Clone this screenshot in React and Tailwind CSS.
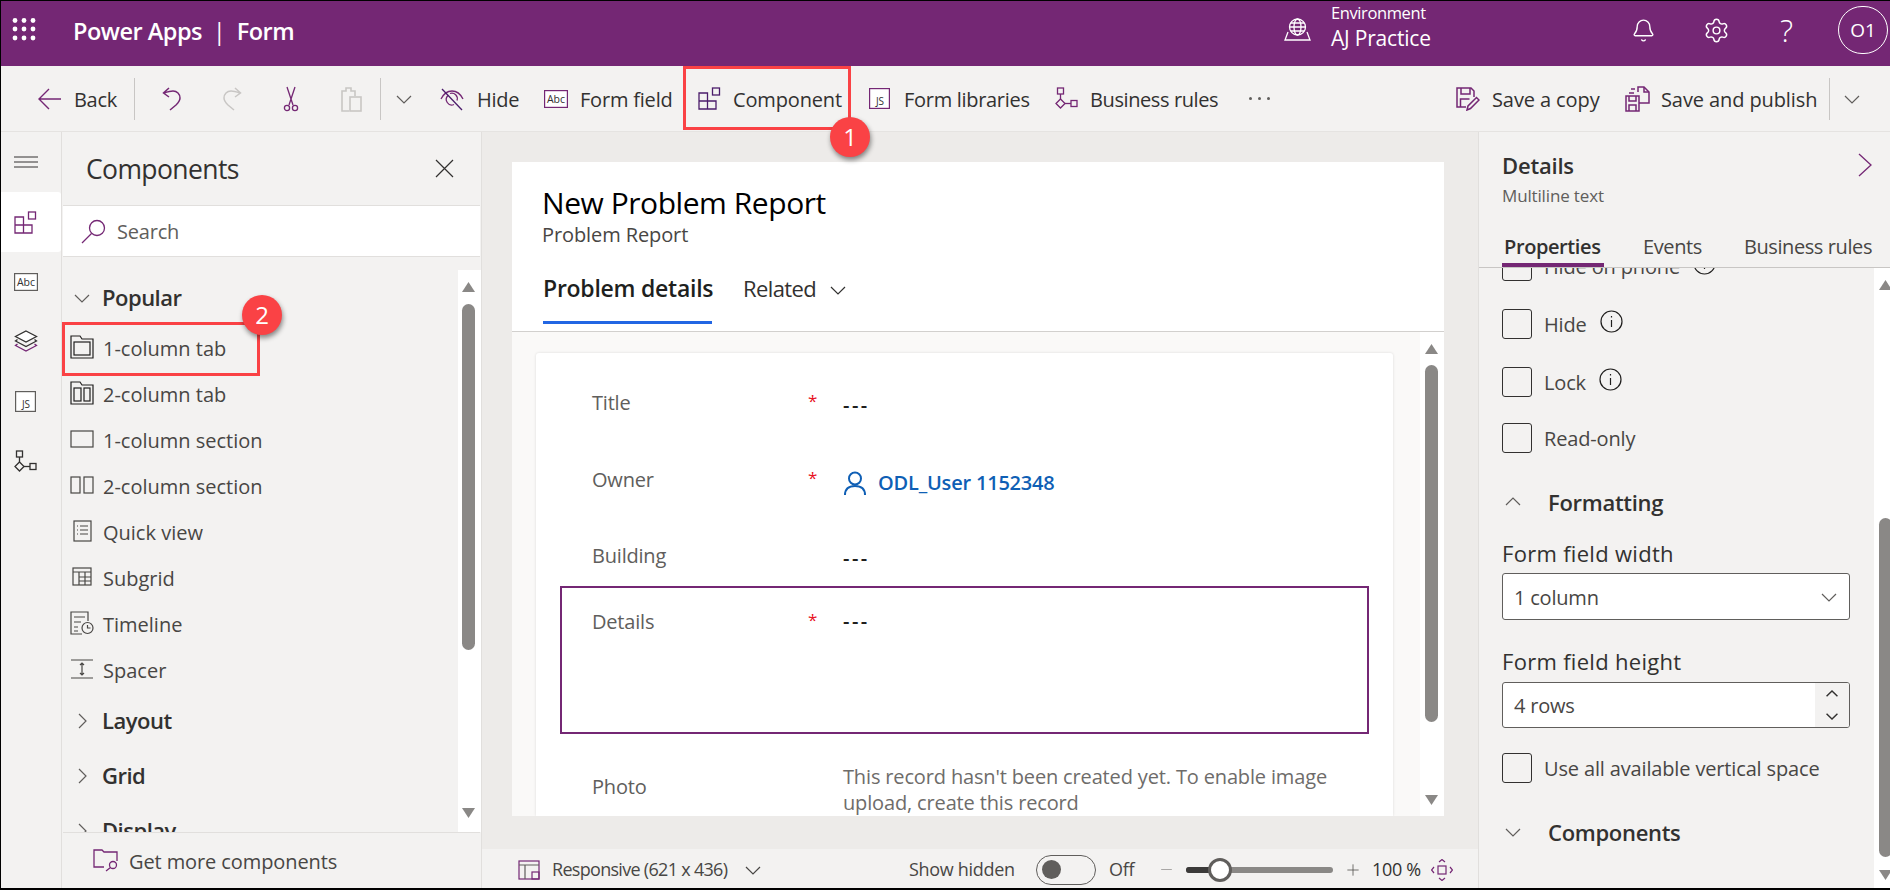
import React from 'react';
import { Bell, Settings, Minus, Plus } from 'lucide-react';

const PURPLE = '#742774';
const DARK = '#323130';

const Chev = ({ dir = 'down', size = 18, color = '#605e5c', w = 1.2 }) => {
    const pts = {
        down: '2,6 9,13 16,6',
        up: '2,12 9,5 16,12',
        right: '6,2 13,9 6,16',
    };
    return (
        <svg width={size} height={size} viewBox="0 0 18 18" className="shrink-0">
            <polyline points={pts[dir]} fill="none" stroke={color} strokeWidth={w} />
        </svg>
    );
};

const Waffle = () => (
    <svg width="26" height="24" viewBox="0 0 26 24" className="shrink-0">
        {[3, 12, 21].map((x) => [2.5, 11, 20].map((y) => (
            <circle key={`${x}-${y}`} cx={x} cy={y} r="2.4" fill="white" />
        )))}
    </svg>
);

const GlobeIcon = () => (
    <svg width="29" height="24" viewBox="0 0 29 24" fill="none" stroke="white" strokeWidth="1.3" className="shrink-0">
        <circle cx="14.5" cy="9" r="8" />
        <ellipse cx="14.5" cy="9" rx="3.5" ry="8" />
        <path d="M6.5 9h16M7.5 5h14M7.5 13h14" />
        <path d="M5 14l-3 8h25l-3-8" />
    </svg>
);

const BackIcon = () => (
    <svg width="23" height="24" viewBox="0 0 23 24" fill="none" stroke={PURPLE} strokeWidth="1.4" className="shrink-0">
        <path d="M11 2L1 12l10 10M1 12h22" />
    </svg>
);

const UndoIcon = ({ color = PURPLE, flip }) => (
    <svg width="20" height="24" viewBox="0 0 20 24" fill="none" stroke={color} strokeWidth="1.5" className={`shrink-0 ${flip ? '-scale-x-100' : ''}`}>
        <path d="M7 1L1.500 6L7 10M2 6c3-1 6-2 9-2c4 0 7 3 7 7c0 3-2 5-4 7l-6 5" />
    </svg>
);

const CutIcon = () => (
    <svg width="16" height="26" viewBox="0 0 16 26" fill="none" stroke={PURPLE} strokeWidth="1.3" className="shrink-0">
        <path d="M4 1l6 18M12 1L6 19" />
        <circle cx="4" cy="22" r="2.600" />
        <circle cx="12" cy="22" r="2.600" />
    </svg>
);

const PasteIcon = () => (
    <svg width="22" height="26" viewBox="0 0 22 26" fill="none" stroke="#c8c6c4" strokeWidth="1.6" className="shrink-0">
        <path d="M9 25H2V5h4V2h5v3h4v5" />
        <rect x="10" y="11" width="11" height="14" />
    </svg>
);

const HideIcon = () => (
    <svg width="24" height="26" viewBox="0 0 24 26" fill="none" stroke={PURPLE} strokeWidth="1.300" className="shrink-0">
        <path d="M1 13c3-6 7-8 11-8s8 2 11 8" />
        <path d="M8 9.500a5.500 5.500 0 0 0 6 9M10 7.500a5.500 5.500 0 0 1 7 7" />
        <path d="M2 3l20 21" stroke="#4b1c6b" />
    </svg>
);

const AbcIcon = ({ w = 24, h = 18, color = PURPLE }) => (
    <svg width={w} height={h} viewBox="0 0 24 18" className="shrink-0">
        <rect x="0.600" y="0.600" width="22.800" height="16.800" fill="white" stroke={color} strokeWidth="1.200" />
        <text x="12" y="13" fontSize="10.500" textAnchor="middle" fill={DARK} fontFamily="Open Sans, sans-serif">Abc</text>
    </svg>
);

const JsIcon = ({ color = PURPLE }) => (
    <svg width="21" height="21" viewBox="0 0 21 21" className="shrink-0">
        <rect x="0.600" y="0.600" width="19.800" height="19.800" fill="white" stroke={color} strokeWidth="1.200" />
        <text x="11" y="17" fontSize="10" textAnchor="middle" fill={DARK} fontFamily="Open Sans, sans-serif">JS</text>
    </svg>
);

const ComponentIcon = ({ color = '#4b1c6b' }) => (
    <svg width="23" height="23" viewBox="0 0 23 23" fill="none" stroke={color} strokeWidth="1.300" className="shrink-0">
        <path d="M1 6h8.500v16H1zM1 14h17v8H9.500M9.500 14h8.500" />
        <rect x="14.500" y="1" width="7" height="7" />
    </svg>
);

const RulesIcon = ({ color = PURPLE }) => (
    <svg width="23" height="23" viewBox="0 0 23 23" fill="none" stroke={color} strokeWidth="1.300" className="shrink-0">
        <rect x="2.500" y="1" width="6" height="6" />
        <path d="M5.500 7v5" />
        <path d="M5.500 12l4.500 4.500L5.500 21 1 16.500z" />
        <path d="M10 16.500h6" />
        <rect x="16" y="13.500" width="6" height="6" />
    </svg>
);

const SaveCopyIcon = () => (
    <svg width="24" height="24" viewBox="0 0 24 24" fill="none" stroke={PURPLE} strokeWidth="1.500" className="shrink-0">
        <path d="M10 20H1V1h14l3 3v6" />
        <path d="M5 1v6h9V1M4.500 20v-8h9" />
        <path d="M11 23l1-4 8.500-8.500 2.500 2.500-8.500 8.500z" />
    </svg>
);

const SavePublishIcon = () => (
    <svg width="25" height="26" viewBox="0 0 25 26" fill="none" stroke={PURPLE} strokeWidth="1.500" className="shrink-0">
        <path d="M1 10h13v15H1zM4 10v5h7v-5M4 25v-6h7v6" />
        <path d="M14 17h10V6l-5-5h-6v5" />
        <path d="M19 1v5h5M6 3h4M4 7h5" />
    </svg>
);

const SearchIcon = () => (
    <svg width="25" height="25" viewBox="0 0 25 25" fill="none" stroke={PURPLE} strokeWidth="1.300" className="shrink-0">
        <circle cx="16" cy="9" r="7.500" />
        <path d="M10.500 14.500L1 24" />
    </svg>
);

const LayersIcon = () => (
    <svg width="24" height="22" viewBox="0 0 24 22" fill="none" stroke={PURPLE} strokeWidth="1.300" className="shrink-0">
        <path d="M12 1l10.500 5.500L12 12 1.500 6.500z" fill="white" stroke={DARK} />
        <path d="M3.500 9.500L1.500 11 12 16.500 22.500 11l-2-1.500" stroke={DARK} />
        <path d="M3.500 14L1.500 15.500 12 21l10.500-5.500-2-1.500" />
    </svg>
);

const ItemIcon = ({ type }) => {
    if (type === 'tab1') return (
        <svg width="24" height="24" viewBox="0 0 24 24" fill="none" stroke="#201f1e" strokeWidth="1.200">
            <path d="M1 23V1h9l2 3h11v19z" />
            <rect x="4" y="7" width="16" height="13" />
        </svg>
    );
    if (type === 'tab2') return (
        <svg width="24" height="24" viewBox="0 0 24 24" fill="none" stroke="#201f1e" strokeWidth="1.200">
            <path d="M1 23V1h9l2 3h11v19z" />
            <rect x="4" y="7" width="7" height="13" />
            <rect x="14" y="7" width="6" height="13" />
        </svg>
    );
    if (type === 'sec1') return (
        <svg width="24" height="18" viewBox="0 0 24 18" fill="none" stroke="#484644" strokeWidth="1.200">
            <rect x="1" y="1" width="22" height="16" />
        </svg>
    );
    if (type === 'sec2') return (
        <svg width="24" height="18" viewBox="0 0 24 18" fill="none" stroke="#484644" strokeWidth="1.200">
            <rect x="1" y="1" width="9" height="16" />
            <rect x="14" y="1" width="9" height="16" />
        </svg>
    );
    if (type === 'quick') return (
        <svg width="24" height="22" viewBox="0 0 24 22" fill="none" stroke="#484644" strokeWidth="1.200">
            <rect x="4" y="1" width="17" height="20" />
            <path d="M7 6h1M10 6h8M7 10h1M10 10h8M7 14h1M10 14h8" />
        </svg>
    );
    if (type === 'grid') return (
        <svg width="24" height="20" viewBox="0 0 24 20" fill="none" stroke="#484644" strokeWidth="1.200">
            <rect x="3" y="1" width="18" height="17" />
            <path d="M3 5h18M9 5v13M15 5v13M9 10h12M9 14h12" />
        </svg>
    );
    if (type === 'time') return (
        <svg width="24" height="24" viewBox="0 0 24 24" fill="none" stroke="#484644" strokeWidth="1.200">
            <path d="M12 23H1V1h17v9" />
            <path d="M4 6h11M4 11h7M4 16h4M4 20h4" />
            <circle cx="17.500" cy="17" r="5.500" />
            <path d="M17.500 14v3h3" />
        </svg>
    );
    return (
        <svg width="24" height="20" viewBox="0 0 24 20" fill="none" stroke="#484644" strokeWidth="1.200">
            <path d="M1 1h22M1 19h22M12 4v12M10 6l2-2 2 2M10 14l2 2 2-2" />
        </svg>
    );
};

const GetMoreIcon = () => (
    <svg width="25" height="23" viewBox="0 0 25 23" fill="none" stroke={PURPLE} strokeWidth="1.300" className="shrink-0">
        <path d="M11 18H1V1h8l2 2h13v9" />
        <circle cx="20" cy="16" r="3.500" />
        <path d="M17.500 18.500L13 22" />
    </svg>
);

const UserIcon = () => (
    <svg width="22" height="25" viewBox="0 0 22 25" fill="none" stroke="#0f5fb5" strokeWidth="2" className="shrink-0">
        <circle cx="11" cy="7.500" r="6" />
        <path d="M1 24c0-6 4-9 10-9s10 3 10 9" />
    </svg>
);

const ResponsiveIcon = () => (
    <svg width="22" height="20" viewBox="0 0 22 20" fill="none" stroke={PURPLE} strokeWidth="1.200" className="shrink-0">
        <rect x="1" y="1" width="20" height="18" />
        <path d="M1 5h20M7 5v14" stroke="#605e5c" />
        <rect x="14" y="12" width="7" height="7" />
    </svg>
);

const FitIcon = () => (
    <svg width="22" height="22" viewBox="0 0 22 22" fill="none" stroke={PURPLE} strokeWidth="1.200" className="shrink-0">
        <rect x="7" y="7" width="8" height="8" />
        <path d="M8 3l3-2.500L14 3M8 19l3 2.500 3-2.500M3 8L.500 11 3 14M19 8l2.500 3-2.500 3" />
    </svg>
);

const Triangle = ({ up, size = 13 }) => (
    <svg width={size} height="10" viewBox="0 0 13 10" className="shrink-0">
        <polygon points={up ? '6.500,0 13,10 0,10' : '0,0 13,0 6.500,10'} fill="#8a8886" />
    </svg>
);

const Info = () => (
    <svg width="23" height="23" viewBox="0 0 23 23" fill="none" stroke="#201f1e" strokeWidth="1.200" className="shrink-0">
        <circle cx="11.500" cy="11.500" r="10.500" />
        <path d="M11.500 10v7M11.500 6v1.500" />
    </svg>
);

const Sep = ({ className = '' }) => <div className={`w-px h-[42px] bg-[#c8c6c4] shrink-0 ${className}`} />;

const Cmd = ({ icon, label, className, gap = 'ml-[13px]', tracking = 'tracking-[-0.3px]' }) => (
    <div className={`flex items-center shrink-0 ${className}`}>
        {icon}
        <span className={`${gap} ${tracking} mt-[3px] text-[20px] text-[#323130] whitespace-nowrap`}>{label}</span>
    </div>
);

const CheckRow = ({ label, info, className = '' }) => (
    <div className={`flex items-center h-[30px] ${className}`}>
        <div className="w-[30px] h-[30px] border border-[#323130] rounded-[3px] shrink-0" />
        <span className="ml-[12px] mt-[2px] text-[20px] tracking-[-0.15px] text-[#484644] whitespace-nowrap">{label}</span>
        {info && <span className="ml-[13px] -mt-[6px]"><Info /></span>}
    </div>
);

const Field = ({ label, star, className = '', children }) => (
    <div className={`flex ${className}`}>
        <span className="w-[216px] text-[20px] leading-[28px] tracking-[-0.2px] text-[#605e5c]">{label}</span>
        <span className="w-[35px] text-[17px] leading-[24px] text-[#e81123]">{star ? '*' : ''}</span>
        <div className="flex-1">{children}</div>
    </div>
);

const Dashes = ({ className = 'pt-[2px]' }) => <span className={`block text-[20px] leading-[28px] font-semibold tracking-[2.5px] text-[#201f1e] ${className}`}>---</span>;

const leftItems = [
    ['tab1', '1-column tab'],
    ['tab2', '2-column tab'],
    ['sec1', '1-column section'],
    ['sec2', '2-column section'],
    ['quick', 'Quick view'],
    ['grid', 'Subgrid'],
    ['time', 'Timeline'],
    ['spacer', 'Spacer'],
];

const Group = ({ label, open }) => (
    <div className="flex items-center h-[55px] shrink-0 pl-[11px]">
        <Chev dir={open ? 'down' : 'right'} />
        <span className="ml-[11px] text-[22px] font-semibold tracking-[-0.5px] text-[#323130]">{label}</span>
    </div>
);

const Badge = ({ n, className }) => (
    <div className={`absolute w-[40px] h-[40px] rounded-full bg-[#fa4245] text-white text-[24px] font-medium flex items-center justify-center shadow-[1px_3px_5px_rgba(0,0,0,0.45)] ${className}`}>{n}</div>
);

export default function App() {
    return (
        <div className="relative w-[1890px] h-[890px] overflow-hidden flex flex-col border-t border-l border-b-2 border-black bg-[#f3f2f1] font-['Open_Sans',sans-serif]">
            {/* Top bar */}
            <header className="h-[65px] shrink-0 bg-[#742774] text-white flex items-center pl-[11px] pr-[2px] pb-[7px]">
                <Waffle />
                <span className="ml-[35px] mt-[3px] text-[23.500px] font-semibold tracking-[-0.5px] whitespace-nowrap">Power Apps</span>
                <span className="ml-[11px] mt-[3px] text-[23px] font-normal">|</span>
                <span className="ml-[11px] mt-[3px] text-[23.500px] font-semibold tracking-[-0.5px]">Form</span>
                <div className="ml-auto flex items-center">
                    <GlobeIcon />
                    <div className="ml-[19px] w-[300px] flex flex-col -mt-[7px]">
                        <span className="text-[16.500px] leading-[22px] tracking-[-0.4px]">Environment</span>
                        <span className="text-[21px] leading-[28px] tracking-[-0.2px]">AJ Practice</span>
                    </div>
                    <Bell size={25} strokeWidth={1.3} />
                    <Settings size={27} strokeWidth={1.3} className="ml-[47px]" />
                    <span className="ml-[50px] w-[13px] text-[31px] leading-none font-light">?</span>
                    <div className="ml-[45px] w-[50px] h-[48px] rounded-full border border-white flex items-center justify-center text-[19px] font-medium">O1</div>
                </div>
            </header>

            {/* Command bar */}
            <div className="h-[66px] shrink-0 flex items-center pl-[37px] border-b border-[#e5e3e1]">
                <Cmd icon={<BackIcon />} label="Back" className="w-[96px]" />
                <Sep />
                <div className="ml-[27px]"><UndoIcon /></div>
                <div className="ml-[40px]"><UndoIcon color="#c8c6c4" flip /></div>
                <div className="ml-[41px]"><CutIcon /></div>
                <div className="ml-[41px]"><PasteIcon /></div>
                <Sep className="ml-[18px]" />
                <div className="ml-[14px]"><Chev /></div>
                <Cmd icon={<HideIcon />} label="Hide" className="ml-[27px] w-[104px]" />
                <Cmd icon={<AbcIcon />} label="Form field" className="w-[154px]" gap="ml-[12px]" tracking="tracking-[-0.2px]" />
                <Cmd icon={<ComponentIcon />} label="Component" className="w-[171px]" gap="ml-[12px]" tracking="tracking-[-0.15px]" />
                <Cmd icon={<JsIcon />} label="Form libraries" className="w-[186px]" gap="ml-[14px]" />
                <Cmd icon={<RulesIcon />} label="Business rules" className="w-[194px]" gap="ml-[12px]" tracking="tracking-[-0.4px]" />
                <div className="flex gap-[6px] shrink-0">
                    <div className="w-[3px] h-[3px] rounded-full bg-[#605e5c]" />
                    <div className="w-[3px] h-[3px] rounded-full bg-[#605e5c]" />
                    <div className="w-[3px] h-[3px] rounded-full bg-[#605e5c]" />
                </div>
                <div className="ml-auto flex items-center pr-[29px]">
                    <Cmd icon={<SaveCopyIcon />} label="Save a copy" className="w-[169px]" gap="ml-[12px]" tracking="tracking-[-0.1px]" />
                    <Cmd icon={<SavePublishIcon />} label="Save and publish" className="w-[204px]" gap="ml-[11px]" tracking="tracking-[-0.1px]" />
                    <Sep />
                    <div className="ml-[13px]"><Chev /></div>
                </div>
            </div>

            {/* Main */}
            <div className="flex-1 min-h-0 flex">
                {/* Rail */}
                <nav className="w-[61px] shrink-0 border-r border-[#e1dfdd] flex flex-col items-center">
                    <div className="h-[60px] w-full flex items-center justify-center pr-[11px]">
                        <svg width="24" height="12" viewBox="0 0 24 12" stroke="#323130" strokeWidth="1"><path d="M0 1h24M0 6h24M0 11h24" /></svg>
                    </div>
                    <div className="h-[60px] w-full bg-white rounded-r-[3px] flex items-center justify-center pr-[11px]"><ComponentIcon color={PURPLE} /></div>
                    <div className="h-[59px] w-full flex items-center justify-center pr-[11px]"><AbcIcon color="#605e5c" /></div>
                    <div className="h-[60px] w-full flex items-center justify-center pr-[11px]"><LayersIcon /></div>
                    <div className="h-[60px] w-full flex items-center justify-center pr-[11px]"><JsIcon color="#605e5c" /></div>
                    <div className="h-[60px] w-full flex items-center justify-center pr-[11px]"><RulesIcon color="#323130" /></div>
                </nav>

                {/* Components panel */}
                <aside className="w-[419px] shrink-0 flex flex-col">
                    <div className="h-[73px] shrink-0 flex items-center pl-[24px] pr-[27px] justify-between">
                        <span className="mt-[2px] text-[26.500px] font-medium tracking-[-0.6px] text-[#323130]">Components</span>
                        <svg width="19" height="19" viewBox="0 0 19 19" stroke="#323130" strokeWidth="1.200"><path d="M1 1l17 17M18 1L1 18" /></svg>
                    </div>
                    <div className="h-[52px] shrink-0 mx-px bg-white border-y border-[#e1dfdd] flex items-center pl-[18px]">
                        <SearchIcon />
                        <span className="ml-[11px] mt-[2px] text-[20px] tracking-[-0.2px] text-[#605e5c]">Search</span>
                    </div>
                    <div className="h-[13px] shrink-0" />
                    <div className="flex-1 min-h-0 flex overflow-hidden">
                        <div className="flex-1 flex flex-col overflow-hidden">
                            <Group label="Popular" open />
                            {leftItems.map(([type, label]) => (
                                <div key={label} className="h-[46px] shrink-0 flex items-center pl-[8px]">
                                    <div className="w-[24px] flex justify-center shrink-0 -mt-[3px]"><ItemIcon type={type} /></div>
                                    <span className="ml-[9px] mt-[2px] text-[20px] tracking-[0px] text-[#484644] whitespace-nowrap">{label}</span>
                                </div>
                            ))}
                            <Group label="Layout" />
                            <Group label="Grid" />
                            <Group label="Display" />
                        </div>
                        <div className="w-[23px] shrink-0 bg-white flex flex-col items-center pt-[12px] pb-[14px] pr-[3px]">
                            <Triangle up />
                            <div className="mt-[12px] h-[346px] w-[13px] rounded-full bg-[#8a8886]" />
                            <div className="mt-auto"><Triangle /></div>
                        </div>
                    </div>
                    <div className="h-[56px] shrink-0 mx-px border-t border-[#e1dfdd] flex items-center pl-[30px]">
                        <GetMoreIcon />
                        <span className="ml-[11px] mt-[2px] text-[20px] tracking-[-0.1px] text-[#484644]">Get more components</span>
                    </div>
                </aside>

                {/* Center */}
                <main className="w-[997px] shrink-0 flex flex-col bg-[#edebe9] border-l border-[#e1dfdd]">
                    <div className="h-[684px] shrink-0 pt-[30px] pl-[30px] pr-[34px]">
                        <div className="h-[654px] flex flex-col">
                            <div className="h-[170px] shrink-0 bg-white border-b border-[#d2d0ce] pl-[31px] pt-[21px]">
                                <div className="-ml-px text-[30px] leading-[40px] font-medium tracking-[-0.45px] text-[#000]">New Problem Report</div>
                                <div className="-ml-px text-[20px] leading-[24px] font-medium tracking-[-0.1px] text-[#484644]">Problem Report</div>
                                <div className="mt-[26px] flex items-start">
                                    <div className="h-[51px] border-b-[3px] border-[#2266e3] text-[23px] leading-[30px] font-semibold tracking-[-0.25px] text-[#201f1e] whitespace-nowrap w-[169px]">Problem details</div>
                                    <span className="ml-[31px] text-[22px] leading-[30px] tracking-[-0.6px] text-[#323130]">Related</span>
                                    <span className="ml-[13px] mt-[8px]"><Chev color="#323130" /></span>
                                </div>
                            </div>
                            <div className="flex-1 min-h-0 flex bg-[#faf9f8] overflow-hidden">
                                <div className="ml-[24px] mt-[21px] w-[857px] bg-white rounded-t-[3px] shadow-[0_0_3px_rgba(0,0,0,0.12)] flex flex-col pt-[36px] overflow-hidden">
                                    <Field label="Title" star className="pl-[56px] h-[77px]"><Dashes /></Field>
                                    <Field label="Owner" star className="pl-[56px] h-[76px]">
                                        <div className="flex items-center pt-[3px] pl-px">
                                            <UserIcon />
                                            <span className="ml-[12px] text-[20px] leading-[28px] font-semibold tracking-[-0.2px] text-[#0f5fb5] whitespace-nowrap">ODL_User 1152348</span>
                                        </div>
                                    </Field>
                                    <Field label="Building" className="pl-[56px] h-[44px]"><Dashes /></Field>
                                    <div className="ml-[24px] w-[809px] h-[148px] shrink-0 border-2 border-[#742774] pl-[30px] pt-[20px]">
                                        <Field label="Details" star><Dashes className="-mt-px" /></Field>
                                    </div>
                                    <Field label="Photo" className="pl-[56px] mt-[39px]">
                                        <div className="-mt-[9px] w-[500px] text-[20px] leading-[26px] tracking-[-0.15px] text-[#6e6c6a]">This record hasn't been created yet. To enable image upload, create this record</div>
                                    </Field>
                                </div>
                                <div className="ml-auto w-[24px] shrink-0 bg-white flex flex-col items-center pt-[12px] pb-[11px] pr-[2px]">
                                    <Triangle up />
                                    <div className="mt-[11px] h-[357px] w-[13px] rounded-full bg-[#8a8886]" />
                                    <div className="mt-auto"><Triangle /></div>
                                </div>
                            </div>
                        </div>
                    </div>
                    <div className="flex-1" />
                    <div className="h-[39px] shrink-0 bg-[#f3f2f1] flex items-center pl-[36px] pt-[2px] text-[18px] tracking-[-0.3px] text-[#484644] whitespace-nowrap">
                        <ResponsiveIcon />
                        <span className="ml-[12px] w-[180px] tracking-[-0.7px]">Responsive (621 x 436)</span>
                        <span className="ml-[12px]"><Chev color="#484644" /></span>
                        <span className="ml-[147px] w-[105px]">Show hidden</span>
                        <div className="ml-[22px] w-[60px] h-[30px] rounded-full border border-[#605e5c] flex items-center pl-[5px]">
                            <div className="w-[19px] h-[19px] rounded-full bg-[#605e5c]" />
                        </div>
                        <span className="ml-[13px] w-[36px]">Off</span>
                        <Minus size={17} strokeWidth={1} color="#8a8886" className="ml-[13px]" />
                        <div className="relative ml-[11px] w-[147px] h-[6px] rounded-full bg-[#8a8886]">
                            <div className="absolute left-0 top-0 h-[6px] w-[24px] rounded-l-full bg-[#3b3a39]" />
                            <div className="absolute left-[22px] -top-[9px] w-[24px] h-[24px] rounded-full bg-white border-[3px] border-[#605e5c]" />
                        </div>
                        <Plus size={18} strokeWidth={1} color="#484644" className="ml-[11px]" />
                        <span className="ml-[10px] w-[50px] text-[#323130]">100 %</span>
                        <span className="ml-[9px]"><FitIcon /></span>
                    </div>
                </main>

                {/* Details panel */}
                <aside className="flex-1 min-w-0 flex flex-col border-l border-[#e1dfdd]">
                    <div className="h-[136px] shrink-0 border-b border-[#c8c6c4] pl-[23px] pt-[18px]">
                        <div className="flex items-center justify-between pr-[18px] h-[30px]">
                            <span className="text-[22px] font-semibold tracking-[-0.2px] text-[#323130]">Details</span>
                            <svg width="14" height="24" viewBox="0 0 14 24" fill="none" stroke={PURPLE} strokeWidth="1.300"><path d="M1 1l12 11L1 23" /></svg>
                        </div>
                        <div className="mt-[4px] text-[17px] leading-[24px] tracking-[-0.15px] text-[#605e5c]">Multiline text</div>
                        <div className="mt-[25px] flex h-[28px] text-[20px] leading-[28px] tracking-[-0.4px] text-[#484644] whitespace-nowrap">
                            <div className="w-[102px] h-[34px] pl-[2px] border-b-4 border-[#742774] font-semibold text-[#323130]">Properties</div>
                            <span className="ml-[39px]">Events</span>
                            <span className="ml-[42px]">Business rules</span>
                        </div>
                    </div>
                    <div className="flex-1 min-h-0 flex">
                        <div className="flex-1 min-w-0 overflow-hidden pl-[23px] pr-[24px]">
                            <CheckRow label="Hide on phone" info className="-mt-[17px]" />
                            <CheckRow label="Hide" info className="mt-[28px]" />
                            <CheckRow label="Lock" info className="mt-[28px]" />
                            <CheckRow label="Read-only" className="mt-[26px]" />
                            <div className="mt-[24px] h-[50px] flex items-center">
                                <span className="ml-[2px]"><Chev dir="up" /></span>
                                <span className="ml-[26px] text-[22px] font-semibold tracking-[-0.3px] text-[#323130]">Formatting</span>
                            </div>
                            <div className="mt-[13px] text-[22px] leading-[26px] font-medium tracking-[0.3px] text-[#323130]">Form field width</div>
                            <div className="mt-[7px] h-[47px] bg-white border border-[#605e5c] rounded-[3px] flex items-center justify-between pl-[11px] pr-[11px] text-[20px] tracking-[-0.2px] text-[#484644]">
                                <span className="mt-[2px]">1 column</span>
                                <Chev color="#605e5c" />
                            </div>
                            <div className="mt-[28px] text-[22px] leading-[26px] font-medium tracking-[0.3px] text-[#323130]">Form field height</div>
                            <div className="mt-[8px] h-[46px] bg-white border border-[#605e5c] rounded-[3px] flex items-center pl-[11px] text-[20px] tracking-[-0.2px] text-[#484644] overflow-hidden">
                                <span className="mt-[2px]">4 rows</span>
                                <div className="ml-auto w-[34px] h-full bg-[#f3f2f1] flex flex-col items-center justify-center">
                                    <Chev dir="up" size={14} color="#323130" w={1.800} />
                                    <div className="h-[8px]" />
                                    <Chev size={14} color="#323130" w={1.800} />
                                </div>
                            </div>
                            <CheckRow label="Use all available vertical space" className="mt-[25px]" />
                            <div className="mt-[24px] h-[50px] flex items-center">
                                <span className="ml-[2px]"><Chev /></span>
                                <span className="ml-[26px] text-[22px] font-semibold tracking-[-0.3px] text-[#323130]">Components</span>
                            </div>
                        </div>
                        <div className="w-[16px] shrink-0 bg-white flex flex-col pl-[5px] pt-[12px] pb-[8px] overflow-hidden">
                            <Triangle up />
                            <div className="mt-[228px] h-[339px] w-[13px] rounded-full bg-[#8a8886]" />
                            <div className="mt-auto"><Triangle /></div>
                        </div>
                    </div>
                </aside>
            </div>

            {/* Callouts */}
            <div className="absolute left-[682px] top-[65px] w-[168px] h-[64px] border-[3px] border-[#fa4245]" />
            <div className="absolute left-[61px] top-[321px] w-[198px] h-[54px] border-[3px] border-[#fa4245]" />
            <Badge n="1" className="left-[829px] top-[116px]" />
            <Badge n="2" className="left-[241px] top-[294px]" />
        </div>
    );
}
